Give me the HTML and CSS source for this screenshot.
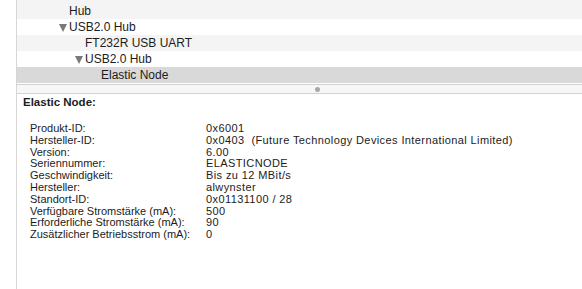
FILE: index.html
```html
<!DOCTYPE html>
<html lang="de">
<head>
  <meta charset="UTF-8">
  <title>Systeminformationen - USB</title>
  <link rel="stylesheet" href="styles.css">
</head>
<body>
  <div class="window">
    <div class="pane">
      <ul class="tree">
        <li class="row first lvl-2">Hub</li>
        <li class="row lvl-2 open"><span class="disclosure"></span>USB2.0 Hub</li>
        <li class="row stripe lvl-3">FT232R USB UART</li>
        <li class="row lvl-3 open"><span class="disclosure"></span>USB2.0 Hub</li>
        <li class="row selected lvl-4">Elastic Node</li>
      </ul>
      <div class="spacer"></div>
      <div class="splitter"><span class="grip"></span></div>
      <div class="details">
        <h2>Elastic Node:</h2>
        <dl class="props">
          <dt>Produkt-ID:</dt><dd>0x6001</dd>
          <dt>Hersteller-ID:</dt><dd>0x0403&nbsp; (Future Technology Devices International Limited)</dd>
          <dt>Version:</dt><dd>6.00</dd>
          <dt>Seriennummer:</dt><dd>ELASTICNODE</dd>
          <dt>Geschwindigkeit:</dt><dd>Bis zu 12 MBit/s</dd>
          <dt>Hersteller:</dt><dd>alwynster</dd>
          <dt>Standort-ID:</dt><dd>0x01131100 / 28</dd>
          <dt>Verfügbare Stromstärke (mA):</dt><dd>500</dd>
          <dt>Erforderliche Stromstärke (mA):</dt><dd>90</dd>
          <dt>Zusätzlicher Betriebsstrom (mA):</dt><dd>0</dd>
        </dl>
      </div>
    </div>
  </div>
</body>
</html>
```

FILE: styles.css
```css
* {
  box-sizing: border-box;
}

body {
  margin: 0;
  background: #fff;
  color: #1c1c1c;
  font-family: 'Liberation Sans', Arial, sans-serif;
  height: 100vh;
  overflow: hidden;
}

.window {
  padding-left: 16px;
  height: 100%;
}

.pane {
  border-left: 1px solid #d6d6d6;
  height: 100%;
}

/* device tree */
.tree {
  list-style: none;
  margin: 0;
  padding: 0;
  font-size: 12px;
}

.row {
  height: 16px;
  line-height: 16px;
  white-space: nowrap;
}

.row.first {
  height: 19px;
  line-height: 22px;
  background: #f4f4f4;
}

.row.stripe {
  background: #f4f4f4;
}

.row.selected {
  background: #d9d9d9;
}

.lvl-2 { padding-left: 52px; }
.lvl-3 { padding-left: 68px; }
.lvl-4 { padding-left: 84px; }

.row.open {
  margin-left: -10px;
}

.disclosure {
  display: inline-block;
  width: 0;
  height: 0;
  border-left: 4px solid transparent;
  border-right: 4px solid transparent;
  border-top: 8px solid #7a7a7a;
  margin-right: 2px;
  vertical-align: -1px;
}

.spacer {
  height: 1px;
}

.splitter {
  height: 10px;
  border-top: 1px solid #d2d2d2;
  border-bottom: 1px solid #d2d2d2;
  background: #f7f7f7;
  display: flex;
  justify-content: center;
  align-items: center;
  padding-left: 36px;
}

.grip {
  width: 5px;
  height: 5px;
  border-radius: 50%;
  background: #a8a8a8;
}

/* detail view */
.details {
  padding: 1px 0 0 6px;
  font-size: 11px;
}

.details h2 {
  margin: 0;
  font-size: 11.5px;
  font-weight: bold;
  line-height: 14px;
}

.props {
  display: grid;
  grid-template-columns: 176px auto;
  margin: 14px 0 0 7px;
  line-height: 11.8px;
}

.props dt,
.props dd {
  margin: 0;
  white-space: nowrap;
}

.props dd {
  letter-spacing: 0.4px;
}
```
